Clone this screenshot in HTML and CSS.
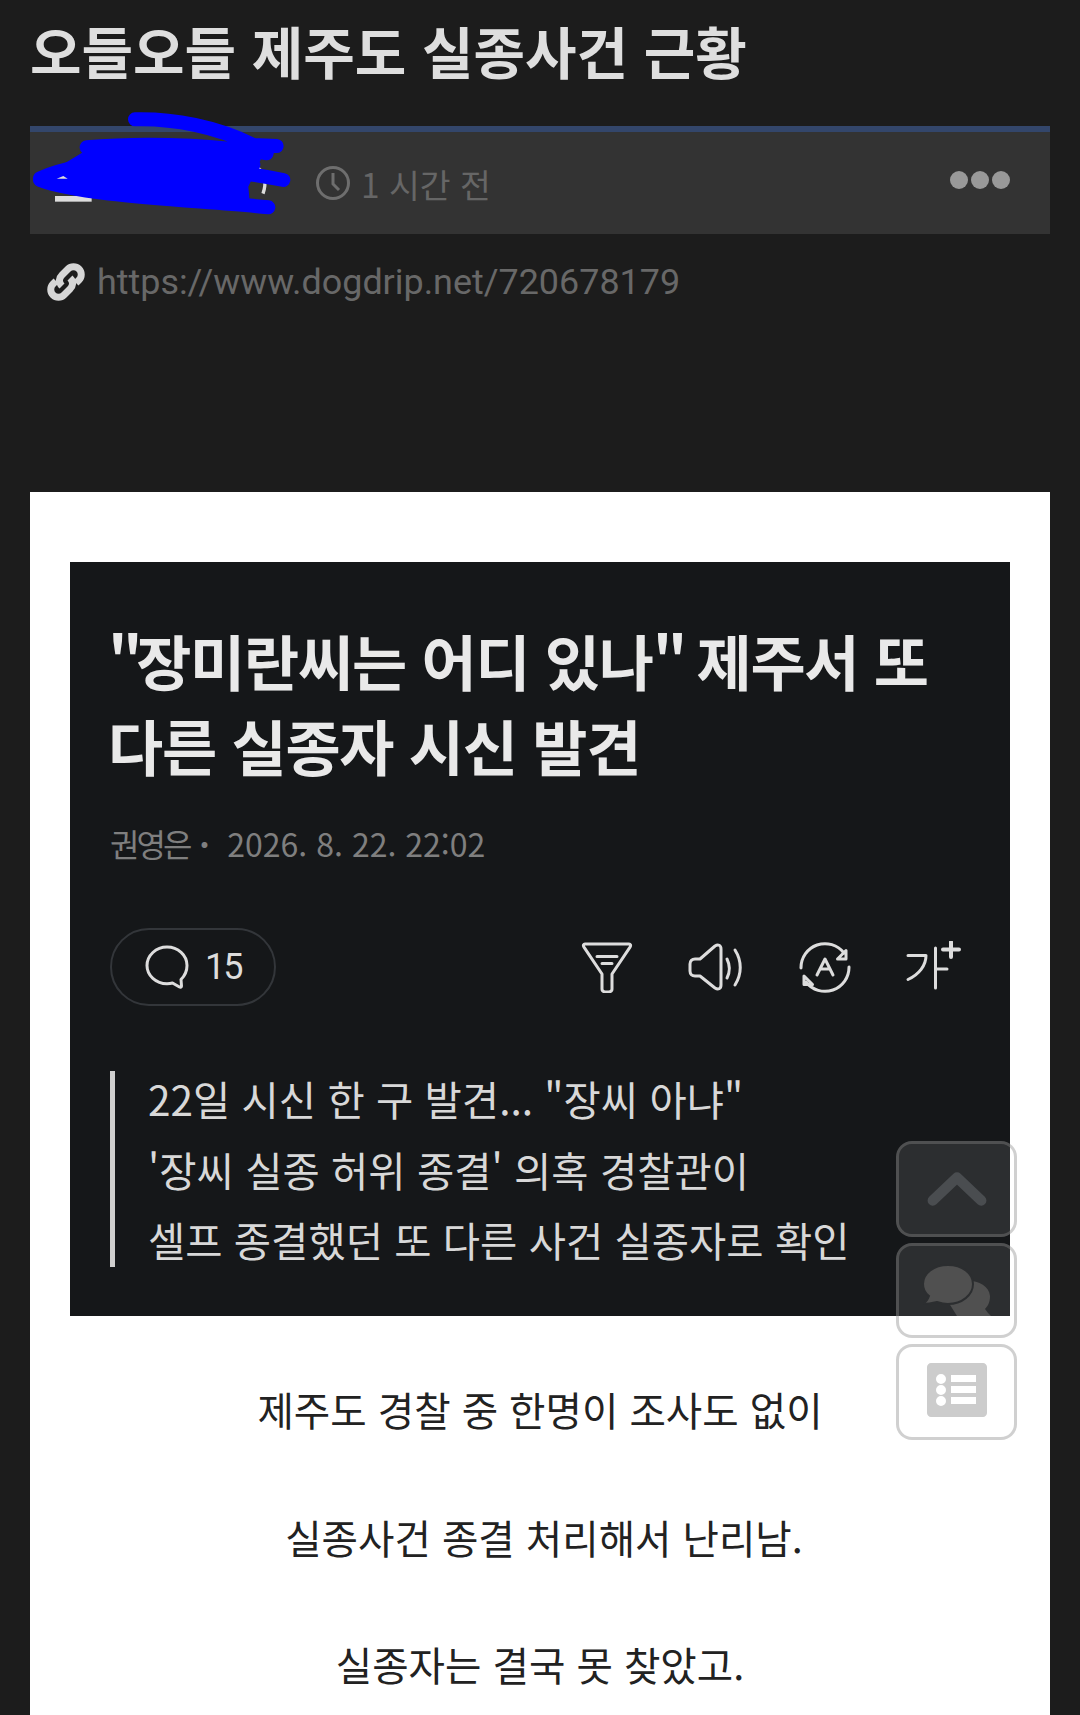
FILE: index.html
```html
<!DOCTYPE html>
<html lang="ko">
<head>
    <meta charset="UTF-8">
    <title>오들오들 제주도 실종사건 근황</title>
    <link rel="stylesheet" href="styles.css">
</head>
<body>
    <div class="page">
        <h1 class="post-title">오들오들 제주도 실종사건 근황</h1>

        <div class="post-bar">
            <div class="author"></div>
            <div class="time">
                <svg class="clock" viewBox="0 0 36 36"><circle cx="18" cy="18" r="15.500"/><path d="M18 8v11l6 6"/></svg>
                <span>1 시간 전</span>
            </div>
            <div class="dots"><i></i><i></i><i></i></div>
        </div>

        <div class="post-url">
            <svg class="link-icon" viewBox="0 0 44 44"><path d="M18 26c-4-4-3-8 0-11l6-6c3-3 8-3 11 0s3 8 0 11l-3 3"/><path d="M26 18c4 4 3 8 0 11l-6 6c-3 3-8 3-11 0s-3-8 0-11l3-3"/></svg>
            <span>https://www.dogdrip.net/720678179</span>
        </div>

        <div class="post-body">
            <div class="news">
                <h2 class="news-title"><span class="q-open">"</span>장미란씨는 어디 있나<span class="q-close">"</span> 제주서 또<br>다른 실종자 시신 발견</h2>
                <div class="news-meta"><span class="news-author">권영은</span><b>·</b><span>2026. 8. 22. 22:02</span></div>
                <div class="news-tools">
                    <div class="comments">
                        <svg class="tool-sm" viewBox="0 0 44 44"><path d="M22 2C33 2 42 10 42 20.500c0 6-3 11-6 14l.5 6.500c0 1-1 1.500-2 1l-7-4c-1.500.5-3.500.7-5.500.7C11 38.700 2 30.500 2 20.500S11 2 22 2z"/></svg>
                        <span>15</span>
                    </div>
                    <div class="tools">
                        <svg class="tool" viewBox="0 0 56 52"><path d="M6 3h44c1.500 0 2 1.500 1.200 2.800L33 33v15c0 4-10 4-10 0V33L4.800 5.800C4 4.500 4.500 3 6 3z"/><path d="M18 15.500h20M23 22.500h10"/></svg>
                        <svg class="tool" viewBox="0 0 56 52"><path d="M12 18L27 5c3-2 6-1 6 3v36c0 4-3 5-6 3L12 35H7c-3 0-5-2-5-5v-7c0-3 2-5 5-5z"/><path d="M39 18c3 6 3 13 0 19M47 9c7 11 7 24 0 35"/></svg>
                        <svg class="tool" viewBox="0 0 56 52"><path d="M4 27A24 24 0 0 1 47 12M52 26A24 24 0 0 1 9 41"/><path d="M49 9.500V18h-8.500zM7 35v8.500h8.500z"/><path d="M20 34l8-16 8 16M23 28h10"/></svg>
                        <svg class="tool" viewBox="0 0 56 52"><path d="M2 14.500h18c0 10-7 19-18 24"/><path d="M29.500 7v40M29.500 28H41"/><path class="plus" d="M45 1v15M37 8.500h16"/></svg>
                    </div>
                </div>
                <div class="news-quote">
                    <p>22일 시신 한 구 발견... "장씨 아냐"</p>
                    <p>'장씨 실종 허위 종결' 의혹 경찰관이</p>
                    <p>셀프 종결했던 또 다른 사건 실종자로 확인</p>
                </div>
            </div>

            <div class="post-text">
                <p>제주도 경찰 중 한명이 조사도 없이</p>
                <p>실종사건 종결 처리해서 난리남.</p>
                <p>실종자는 결국 못 찾았고.</p>
            </div>
        </div>
    </div>

    <!-- censored author name -->
    <svg class="scribble" viewBox="0 0 1080 720">
        <rect class="under" x="165" y="318" width="110" height="17"/>
        <path class="under-ring" d="M775 235c20 15 25 45 14 76"/>
        <path class="fill" d="M260 180L800 170L745 290L750 345L200 310L120 265Z"/>
        <path class="ink" d="M405 88C520 85 650 110 760 165L830 168M260 172C400 160 600 160 800 190M120 265C250 205 500 200 760 225M120 265C300 220 600 220 850 270M120 270C250 320 600 330 805 352"/>
        <path class="under" d="M170 266l20-8 13 8z"/>
    </svg>

    <div class="side-btns">
        <div class="side-btn">
            <svg viewBox="0 0 52 32"><path class="chev" d="M5 26L26 6l21 20"/></svg>
        </div>
        <div class="side-btn">
            <svg class="talk" viewBox="0 0 68 52"><path d="M24 36L36 18C50 14 66 20 67 32c0 6-2 10-5 13 2 3 4 5 6 7H34z"/><path class="big" d="M25 1c14 0 25 8 25 19S39 40 25 40c-4 0-8-1-11-2-4 1-9 2-14 2 3-2 5-5 6-8C2 29 0 25 0 20 0 9 11 1 25 1z"/></svg>
        </div>
        <div class="side-btn">
            <svg class="list" viewBox="0 0 60 54"><path fill-rule="evenodd" d="M4 0h52c2 0 4 2 4 4v46c0 2-2 4-4 4H4c-2 0-4-2-4-4V4c0-2 2-4 4-4zm10 11a5 5 0 1 0 0 10 5 5 0 0 0 0-10zm10 1v7h25v-7zM14 22a5 5 0 1 0 0 10 5 5 0 0 0 0-10zm10 1v7h25v-7zM14 33a5 5 0 1 0 0 10 5 5 0 0 0 0-10zm10 1v7h25v-7z"/></svg>
        </div>
    </div>
</body>
</html>
```

FILE: styles.css
```css
html, body {
    margin: 0;
    height: 1715px;
    overflow: hidden;
}
body {
    position: relative;
    background-color: #1c1c1c;
    font-family: "Noto Sans CJK KR", "Noto Sans", sans-serif;
}
.page {
    padding: 0 30px;
}
.post-title {
    margin: 0;
    padding-top: 12px;
    height: 126px;
    box-sizing: border-box;
    font-size: 56px;
    line-height: 76px;
    font-weight: 700;
    color: #dedede;
    white-space: nowrap;
}
.post-bar {
    height: 108px;
    box-sizing: border-box;
    display: flex;
    align-items: center;
    background-color: #333333;
    border-top: 6px solid #33466b;
    padding-right: 40px;
}
.author {
    width: 285px;
}
.time {
    display: flex;
    align-items: center;
    gap: 10px;
    font-size: 33.500px;
    color: #666666;
}
.clock {
    width: 36px;
    height: 36px;
    fill: none;
    stroke: #6e6e6e;
    stroke-width: 3;
}
.dots {
    margin-left: auto;
    display: flex;
    gap: 3px;
    margin-top: -6px;
}
.dots i {
    width: 18px;
    height: 18px;
    border-radius: 50%;
    background-color: #999999;
}
.post-url {
    display: flex;
    align-items: center;
    gap: 9px;
    height: 86px;
    padding: 9px 0 0 14px;
    box-sizing: border-box;
    font-family: Roboto, sans-serif;
    font-size: 35.900px;
    color: #686868;
}
.link-icon {
    width: 44px;
    height: 44px;
    fill: none;
    stroke: #d6d6d6;
    stroke-width: 7;
    flex: none;
}
.post-body {
    margin-top: 172px;
    background-color: #ffffff;
    padding: 70px 40px 0;
    height: 1240px;
    box-sizing: border-box;
}
.news {
    height: 754px;
    box-sizing: border-box;
    background-color: #151719;
    padding: 55px 40px 0;
}
.news-title {
    margin: 0 0 0 -2px;
    font-size: 60px;
    line-height: 85px;
    font-weight: 700;
    letter-spacing: -1.250px;
    color: #e9e9e9;
    white-space: nowrap;
}
.q-open {
    letter-spacing: -6.500px;
}
.q-close {
    letter-spacing: -6.500px;
}
.news-meta {
    display: flex;
    align-items: center;
    margin-top: 33px;
    font-size: 32px;
    line-height: 46px;
    color: #7f7f7f;
}
.news-author {
    letter-spacing: -3px;
}
.news-meta b {
    width: 38px;
    padding-left: 10px;
    box-sizing: border-box;
    font-weight: 700;
}
.news-tools {
    display: flex;
    justify-content: space-between;
    align-items: center;
    margin-top: 62px;
}
.comments {
    display: flex;
    align-items: center;
    gap: 16px;
    width: 166px;
    height: 78px;
    box-sizing: border-box;
    padding-left: 33px;
    border: 2px solid #33363a;
    border-radius: 39px;
    font-family: Roboto, sans-serif;
    font-size: 36px;
    letter-spacing: -2px;
    color: #dddddd;
}
.tool-sm {
    width: 44px;
    height: 44px;
    fill: none;
    stroke: #dddddd;
    stroke-width: 3;
    stroke-linejoin: round;
}
.tools {
    display: flex;
    align-items: center;
    gap: 53px;
    padding-right: 8px;
}
.tool {
    width: 56px;
    height: 52px;
    fill: none;
    stroke: #dddddd;
    stroke-width: 3;
    stroke-linejoin: round;
    stroke-linecap: round;
}
.tool .plus {
    stroke-width: 4;
}
.news-quote {
    margin-top: 65px;
    border-left: 5px solid #cfcfcf;
    padding-left: 33px;
    height: 196px;
    font-size: 40.500px;
    color: #d8d8d8;
    white-space: nowrap;
}
.news-quote p {
    margin: 0;
    line-height: 70.500px;
    position: relative;
    top: -7px;
}
.post-text {
    margin-top: 29px;
    text-align: center;
    font-size: 39.600px;
    color: #222222;
}
.post-text p {
    margin: 0;
    line-height: 127.500px;
}
.post-text p:nth-child(2) {
    padding-left: 8px;
}
.scribble {
    position: absolute;
    left: 0;
    top: 90px;
    width: 360px;
    height: 240px;
}
.scribble .fill {
    fill: #0000ff;
}
.scribble .ink {
    fill: none;
    stroke: #0000ff;
    stroke-width: 42;
    stroke-linecap: round;
}
.scribble .under {
    fill: #dddddd;
}
.scribble .under-ring {
    fill: none;
    stroke: #dddddd;
    stroke-width: 10;
}
.side-btns {
    position: absolute;
    left: 896px;
    top: 1141px;
    display: flex;
    flex-direction: column;
    gap: 6px;
}
.side-btn {
    width: 121px;
    height: 95.500px;
    box-sizing: border-box;
    display: flex;
    align-items: center;
    justify-content: center;
    border: 3px solid rgba(150, 150, 150, 0.45);
    border-radius: 16px;
    background-color: rgba(255, 255, 255, 0.1);
    background-clip: padding-box;
}
.side-btn svg {
    width: 60px;
    height: 54px;
    fill: #cccccc;
}
.side-btn .chev {
    fill: none;
    stroke: #4a4d50;
    stroke-width: 9;
    stroke-linecap: round;
    stroke-linejoin: round;
}
.side-btn .talk {
    width: 68px;
    height: 52px;
    fill: #505050;
}
.side-btn .list {
    margin-bottom: 4px;
}
.talk .big {
    stroke: #2c2e30;
    stroke-width: 2;
}
```
